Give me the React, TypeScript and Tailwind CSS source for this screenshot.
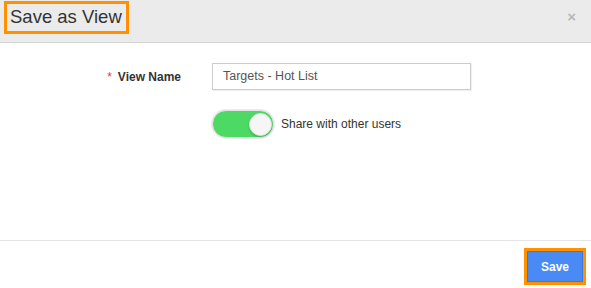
import React from "react";

export default function App() {
  return (
    <div className="w-[591px] h-[288px] bg-white flex flex-col overflow-hidden" style={{ fontFamily: "'Liberation Sans', Arial, sans-serif" }}>
      <div className="h-[43px] bg-[#ebebeb] border-b border-[#d4d4d4] flex items-start justify-between shrink-0">
        <div className="ml-[4px] mt-[1px] h-[33px] w-[125px] border-[3px] border-[#ff9000] flex items-center pl-[3px]">
          <span className="text-[18.5px] text-[#333] leading-none whitespace-nowrap">Save as View</span>
        </div>
        <span className="mr-[15px] mt-[9px] text-[15px] font-bold text-[#b9b9b9] leading-none">×</span>
      </div>
      <div className="flex-1 flex flex-col pt-[20px]">
        <div className="flex items-center h-[27px]">
          <div className="w-[212px] flex justify-end pr-[31px] items-center">
            <span className="text-[#e5383b] text-[12px] mr-[6px] leading-none">*</span>
            <span className="text-[12px] font-bold text-[#333]">View Name</span>
          </div>
          <div className="w-[259px] h-[27px] border border-[#cccccc] flex items-center pl-[10px] text-[12.5px] text-[#555] shadow-[1px_1px_1px_rgba(0,0,0,0.06)]">
            Targets - Hot List
          </div>
        </div>
        <div className="flex items-center mt-[20px] pl-[212px]">
          <div className="w-[62px] h-[28px] rounded-full bg-[#4cd964] border border-[#e3e3e3] flex items-center justify-end pr-[1px] shadow-[0_0_0_1px_#ececec]">
            <div className="w-[23px] h-[23px] rounded-full bg-[#f6f6f6] border border-[#e0e0e0] shadow-[0_1px_2px_rgba(0,0,0,0.2)]" />
          </div>
          <span className="ml-[7px] text-[12px] text-[#333]">Share with other users</span>
        </div>
      </div>
      <div className="h-[48px] border-t border-[#e5e5e5] flex items-start justify-end shrink-0">
        <div className="mt-[7px] mr-[5px] w-[62px] h-[37px] border-[3px] border-[#ff9000] flex">
          <div className="flex-1 bg-[#4a8af4] border border-[#3a78dc] flex items-center justify-center text-white text-[12px] font-bold">
            Save
          </div>
        </div>
      </div>
    </div>
  );
}
